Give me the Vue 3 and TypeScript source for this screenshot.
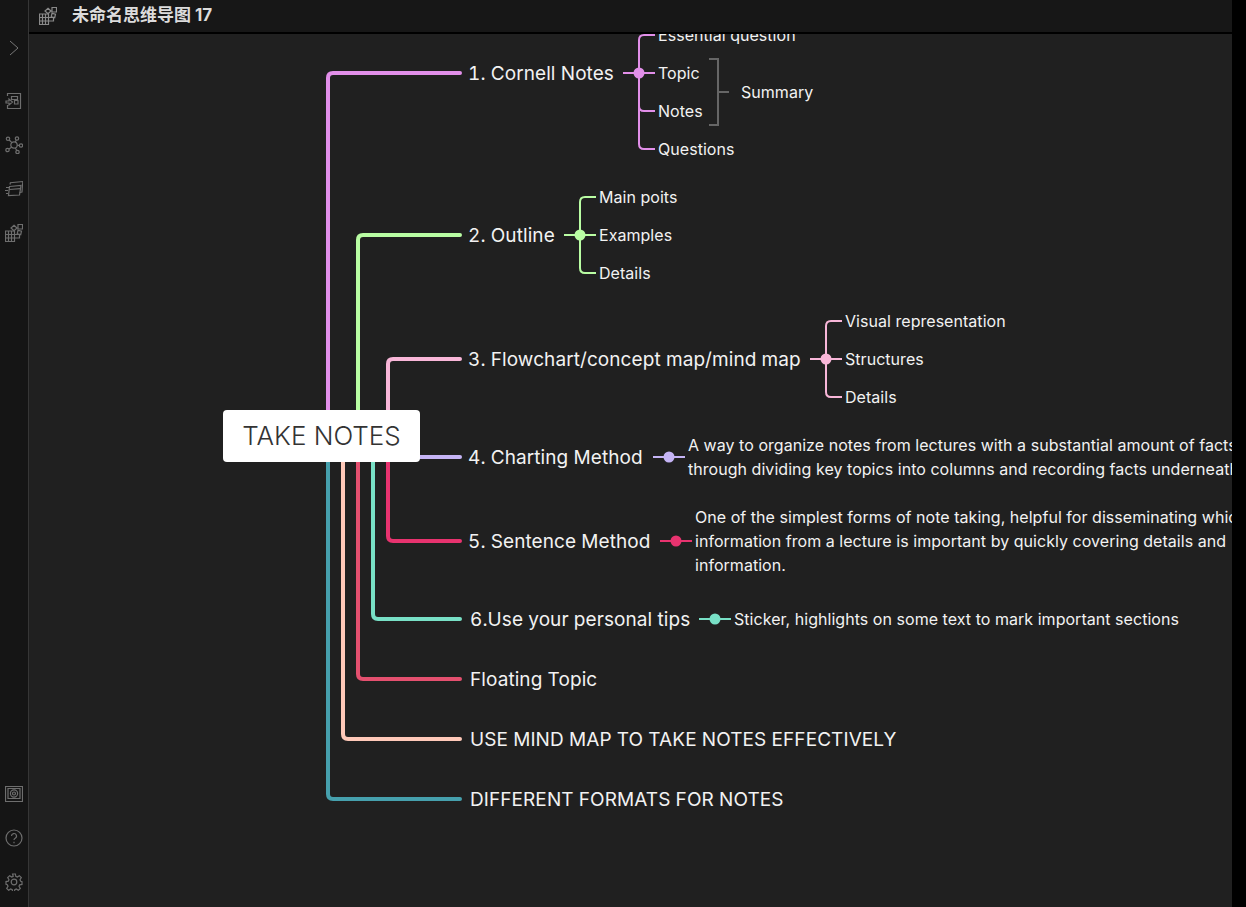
<script setup lang="ts">
interface Label { text: string[]; x: number; y: number; size: 'main' | 'sub' }
interface Branch { color: string; elbowX: number; y: number; startY: number }
interface Fork { color: string; x0: number; cx: number; cy: number; x1: number; top?: number; bottom?: number; kids?: number[] }

const branches: Branch[] = [
  { color: '#e28fe9', elbowX: 328, y: 73, startY: 415 },
  { color: '#b9fda3', elbowX: 358, y: 235, startY: 415 },
  { color: '#f8b6d8', elbowX: 388, y: 359, startY: 415 },
  { color: '#e8336f', elbowX: 388, y: 541, startY: 455 },
  { color: '#78e0c6', elbowX: 373, y: 619, startY: 455 },
  { color: '#e4506f', elbowX: 358, y: 679, startY: 455 },
  { color: '#ffc9b9', elbowX: 343, y: 739, startY: 455 },
  { color: '#46a0ad', elbowX: 328, y: 799, startY: 455 },
]

const forks: Fork[] = [
  { color: '#e28fe9', x0: 623, cx: 639, cy: 73, x1: 655, top: 35, bottom: 149, kids: [35, 111, 149] },
  { color: '#b9fda3', x0: 564, cx: 580, cy: 235, x1: 596, top: 197, bottom: 273, kids: [197, 273] },
  { color: '#f8b6d8', x0: 810, cx: 826, cy: 359, x1: 842, top: 321, bottom: 397, kids: [321, 397] },
  { color: '#c5b4f5', x0: 653, cx: 669, cy: 457, x1: 685 },
  { color: '#e8336f', x0: 660, cx: 676, cy: 541, x1: 692 },
  { color: '#78e0c6', x0: 699, cx: 715, cy: 619, x1: 731 },
]

const labels: Label[] = [
  { text: ['1. Cornell Notes'], x: 468, y: 73, size: 'main' },
  { text: ['Essential question'], x: 658, y: 35, size: 'sub' },
  { text: ['Topic'], x: 658, y: 73, size: 'sub' },
  { text: ['Notes'], x: 658, y: 111, size: 'sub' },
  { text: ['Questions'], x: 658, y: 149, size: 'sub' },
  { text: ['Summary'], x: 741, y: 92, size: 'sub' },
  { text: ['2. Outline'], x: 468, y: 235, size: 'main' },
  { text: ['Main poits'], x: 599, y: 197, size: 'sub' },
  { text: ['Examples'], x: 599, y: 235, size: 'sub' },
  { text: ['Details'], x: 599, y: 273, size: 'sub' },
  { text: ['3. Flowchart/concept map/mind map'], x: 468, y: 359, size: 'main' },
  { text: ['Visual representation'], x: 845, y: 321, size: 'sub' },
  { text: ['Structures'], x: 845, y: 359, size: 'sub' },
  { text: ['Details'], x: 845, y: 397, size: 'sub' },
  { text: ['4. Charting Method'], x: 468, y: 457, size: 'main' },
  { text: ['A way to organize notes from lectures with a substantial amount of facts', 'through dividing key topics into columns and recording facts underneath'], x: 688, y: 457, size: 'sub' },
  { text: ['5. Sentence Method'], x: 468, y: 541, size: 'main' },
  { text: ['One of the simplest forms of note taking, helpful for disseminating which', 'information from a lecture is important by quickly covering details and', 'information.'], x: 695, y: 541, size: 'sub' },
  { text: ['6.Use your personal tips'], x: 470, y: 619, size: 'main' },
  { text: ['Sticker, highlights on some text to mark important sections'], x: 734, y: 619, size: 'sub' },
  { text: ['Floating Topic'], x: 470, y: 679, size: 'main' },
  { text: ['USE MIND MAP TO TAKE NOTES EFFECTIVELY'], x: 470, y: 739, size: 'main' },
  { text: ['DIFFERENT FORMATS FOR NOTES'], x: 470, y: 799, size: 'main' },
]

const CANVAS_TOP = 34
const CANVAS_LEFT = 29
const LINE_HEIGHT = 24
function elbow(b: Branch): string {
  const dir = b.y < b.startY ? 1 : -1
  return `M${b.elbowX} ${b.startY} L${b.elbowX} ${b.y + dir * 5} Q${b.elbowX} ${b.y} ${b.elbowX + 5} ${b.y} L460 ${b.y}`
}
function kid(f: Fork, y: number): string {
  const dir = y < f.cy ? 1 : -1
  return `M${f.cx} ${y + dir * 5} Q${f.cx} ${y} ${f.cx + 5} ${y} L${f.x1} ${y}`
}
function labelStyle(l: Label) {
  const nudge = l.size === 'main' ? 1 : 0
  const top = l.y - (l.text.length * LINE_HEIGHT) / 2 - CANVAS_TOP + nudge
  return { left: `${l.x - CANVAS_LEFT}px`, top: `${top}px` }
}
</script>

<template>
  <div class="app">
    <aside class="ribbon">
      <div class="ribbon-top">
        <svg class="ico chevron" viewBox="0 0 14 18" width="14" height="18"><path d="M3 2l8 7-8 7" /></svg>
      </div>
      <div class="ribbon-group">
        <svg class="ico" viewBox="0 0 18 18" width="18" height="18">
          <path d="M2.500 4V1.500h13v15h-13V13" />
          <path d="M6.500 4.500h6v3h-6zM9.500 8.500h3.500v3.500H9.500z" />
          <path d="M1 9h3V7l3.500 3L4 13v-2H1z" />
        </svg>
        <svg class="ico" viewBox="0 0 18 18" width="18" height="18">
          <circle cx="9" cy="9" r="3.200" />
          <circle cx="3" cy="2.800" r="1.700" /><circle cx="12" cy="2.500" r="1.700" /><circle cx="16" cy="9.500" r="1.700" />
          <circle cx="2.500" cy="14" r="1.700" /><circle cx="12.500" cy="16" r="1.700" />
          <path d="M4.200 4l2.700 2.700M11.400 4l-1.200 2.100M12.200 9.300h2.100M4 13l2.600-1.800M10.300 12l1.500 2.500" />
        </svg>
        <svg class="ico" viewBox="0 0 18 18" width="18" height="18">
          <path d="M5 4.500l.4-1.800L18 1.500l-.5 3L17 12l-2.500.5" />
          <path d="M4.500 6.500L16 5.500l-1.500 9.500-11 .5z" />
          <path d="M4.200 9.500L15.500 8.600" />
          <path d="M1 7.500h3M0 10.500h3M1 13.500h2" />
        </svg>
        <svg class="ico" viewBox="0 0 18 18" width="18" height="18">
          <path d="M0.500 7h9v10.500h-9zM0.500 10.500h9v3.500h5v-3.500h-5M0.500 14h9M3.500 7v10.500M6.500 7v10.500" />
          <path d="M9 1.200l3 2.800-3 2.800-3-2.800zM13 .5h4.500v4.500H13zM13 6.300l3.500.8-.8 3.600-3.500-.8z" />
        </svg>
      </div>
      <div class="ribbon-bottom">
        <svg class="ico" viewBox="0 0 18 18" width="18" height="18">
          <path d="M0.500 1.500h17v15H.5z" />
          <path d="M3 3.500h12v10H3z" />
          <circle cx="9" cy="8.500" r="3.600" /><circle cx="9" cy="8.500" r="1.500" />
        </svg>
        <svg class="ico" viewBox="0 0 18 18" width="18" height="18">
          <circle cx="9" cy="9" r="8" />
          <path d="M6.500 7a2.500 2.500 0 1 1 3.700 2.200C9.300 9.700 9 10.200 9 11" />
          <path d="M9 12.800v1.400" />
        </svg>
        <svg class="ico" viewBox="0 0 18 18" width="18" height="18">
          <circle cx="9" cy="9" r="2.800" />
          <path d="M7.600 1h2.800l.4 2.300 1.500.7 2-1.300 2 2-1.300 2 .7 1.500L17 8.600v2.800l-2.300.4-.7 1.500 1.300 2-2 2-2-1.300-1.500.7-.4 2.300H7.600l-.4-2.300-1.500-.7-2 1.300-2-2 1.300-2-.7-1.500L1 11.400V8.600l2.300-.4.7-1.500-1.300-2 2-2 2 1.300 1.500-.7z" />
        </svg>
      </div>
    </aside>

    <main class="main">
      <header class="titlebar">
        <svg class="ico title-ico" viewBox="0 0 18 18" width="18" height="18">
          <path d="M0.500 7h9v10.500h-9zM0.500 10.500h9v3.500h5v-3.500h-5M0.500 14h9M3.500 7v10.500M6.500 7v10.500" />
          <path d="M9 1.200l3 2.800-3 2.800-3-2.800zM13 .5h4.500v4.500H13zM13 6.300l3.500.8-.8 3.600-3.500-.8z" />
        </svg>
        <span class="title">未命名思维导图 17</span>
      </header>

      <section class="canvas">
        <svg class="wires" width="1203" height="873" viewBox="29 34 1203 873">
          <path v-for="b in branches" :key="b.color + b.y" :d="elbow(b)" :stroke="b.color" class="wire-main" />
          <path d="M410 457H460" stroke="#c5b4f5" class="wire-main" />
          <g v-for="f in forks" :key="f.cx">
            <path :d="`M${f.x0} ${f.cy}H${f.x1}`" :stroke="f.color" class="wire-sub" />
            <path v-if="f.top" :d="`M${f.cx} ${f.top + 5}V${(f.bottom ?? 0) - 5}`" :stroke="f.color" class="wire-sub" />
            <path v-for="y in f.kids" :key="y" :d="kid(f, y)" :stroke="f.color" class="wire-sub" />
            <circle :cx="f.cx" :cy="f.cy" r="5.500" :fill="f.color" />
          </g>
          <path d="M709 59h9v66h-9M718 92h11" class="bracket" />
        </svg>

        <div class="root"><span class="root-text">TAKE NOTES</span></div>

        <div v-for="l in labels" :key="l.text[0] + l.x" class="label" :class="l.size" :style="labelStyle(l)">
          <div v-for="t in l.text" :key="t">{{ t }}</div>
        </div>
      </section>
    </main>

    <div class="scrollstrip"></div>
  </div>
</template>

<style scoped>
.app {
  display: flex;
  width: 1246px;
  height: 907px;
  overflow: hidden;
  background: #000;
  font-family: Inter, "Noto Sans CJK SC", sans-serif;
}
.ribbon {
  flex: none;
  width: 28px;
  border-right: 1px solid #363636;
  background: #151515;
  display: flex;
  flex-direction: column;
  align-items: center;
  padding-top: 39px;
  padding-bottom: 16px;
}
.ribbon-top { height: 18px; display: flex; }
.ribbon-group {
  margin-top: 35px;
  display: flex;
  flex-direction: column;
  gap: 26px;
}
.ribbon-bottom {
  margin-top: auto;
  display: flex;
  flex-direction: column;
  gap: 26px;
}
.ico {
  display: block;
  fill: none;
  stroke: #6e6e6e;
  stroke-width: 1.2;
}
.chevron { stroke: #777; stroke-width: 1; }
.main {
  flex: 1;
  min-width: 0;
  display: flex;
  flex-direction: column;
}
.titlebar {
  flex: none;
  box-sizing: border-box;
  height: 34px;
  border-bottom: 2px solid #000;
  background: #171717;
  display: flex;
  align-items: center;
  padding-left: 10px;
  gap: 15px;
}
.title-ico { stroke: #8a8a8a; }
.title {
  color: #dcdcdc;
  font-size: 17px;
  font-weight: 700;
  line-height: 30px;
  position: relative;
  top: -1px;
}
.canvas {
  flex: 1;
  position: relative;
  overflow: hidden;
  background: #202020;
}
.wires {
  position: absolute;
  left: 0;
  top: 0;
}
.wire-main {
  fill: none;
  stroke-width: 4;
  stroke-linecap: round;
}
.wire-sub {
  fill: none;
  stroke-width: 2;
}
.bracket {
  fill: none;
  stroke: #666;
  stroke-width: 2;
}
.root {
  position: absolute;
  left: 194px;
  top: 376px;
  width: 197px;
  height: 52px;
  border-radius: 4px;
  background: #fff;
  color: #333;
  font-size: 26px;
  font-weight: 300;
  display: flex;
  align-items: center;
  justify-content: center;
  padding-bottom: 2px;
  box-sizing: border-box;
}
.label {
  position: absolute;
  white-space: nowrap;
  color: #f2f2f2;
  line-height: 24px;
}
.label.main {
  font-size: 19px;
  letter-spacing: 0.08px;
  font-variant-numeric: tabular-nums;
}
.label.sub { font-size: 16px; letter-spacing: 0.04px; }
.scrollstrip {
  flex: none;
  width: 14px;
  background: #000;
}
</style>
